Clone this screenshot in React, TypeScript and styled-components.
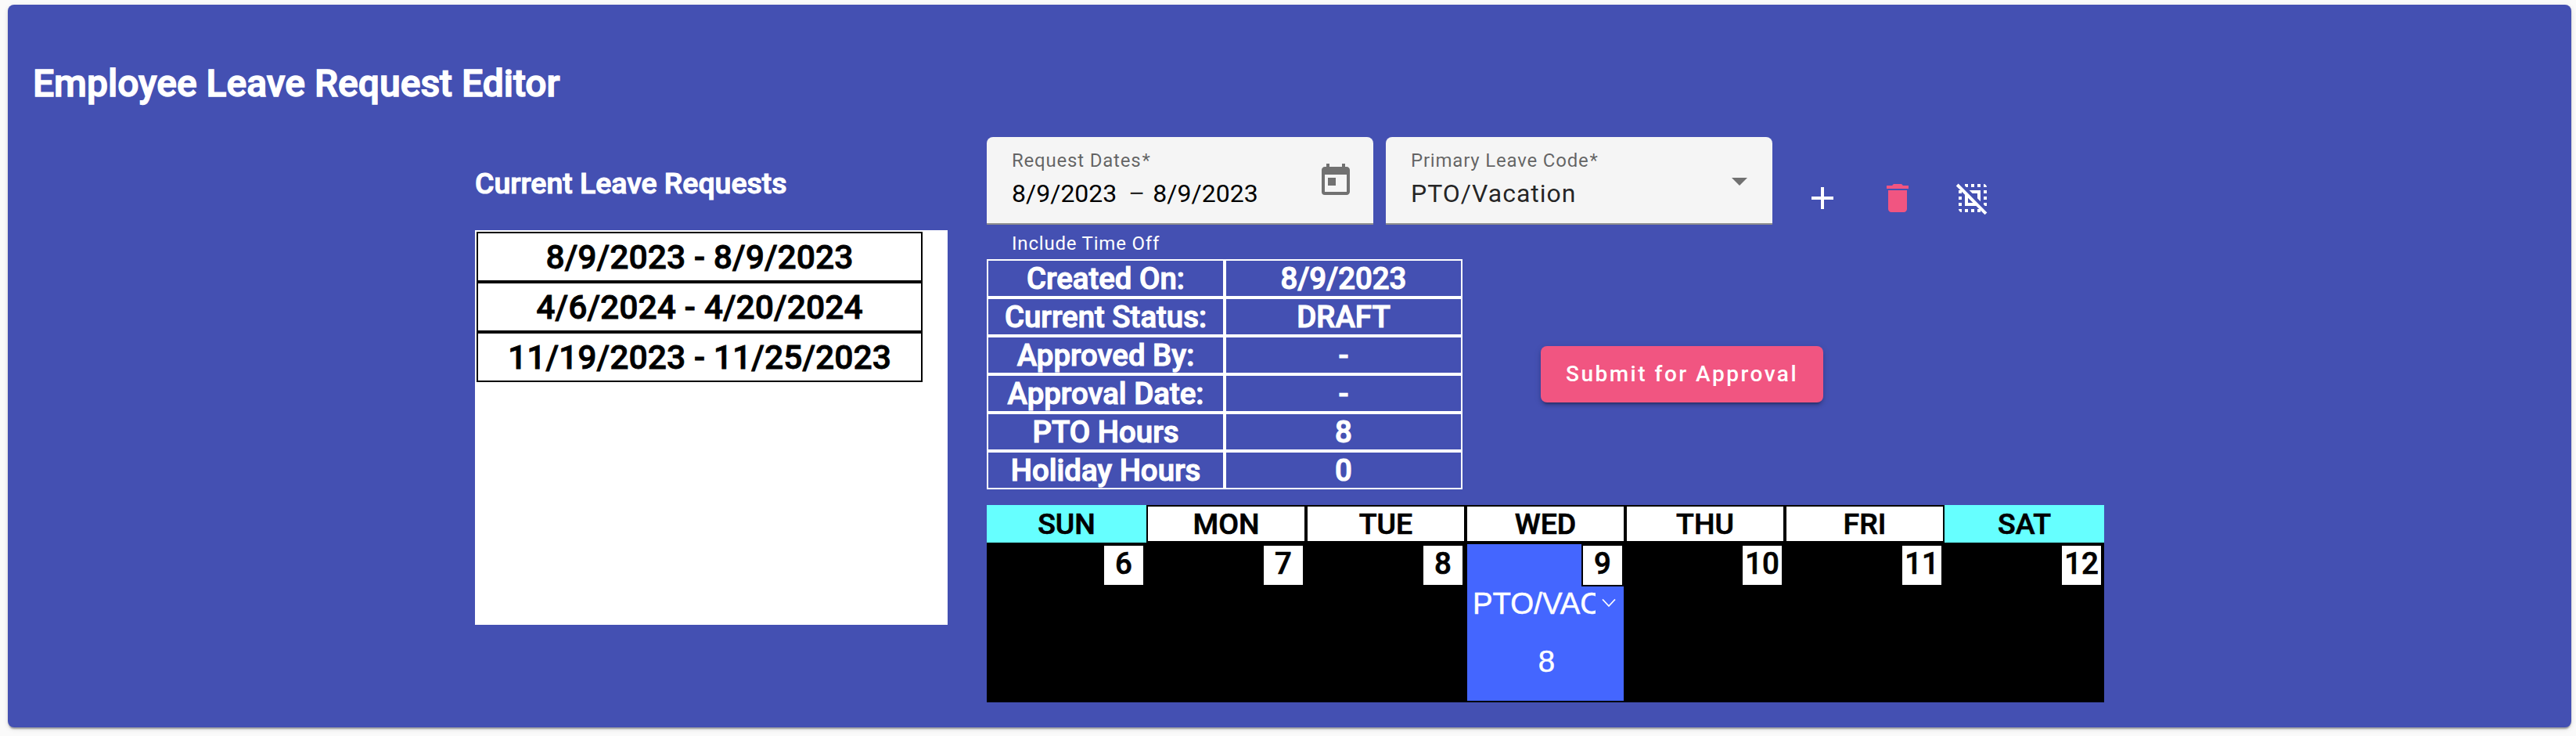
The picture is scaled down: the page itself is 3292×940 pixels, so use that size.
import React from 'react';
import styled, { createGlobalStyle, css } from 'styled-components';
import { MdAdd, MdArrowDropDown, MdDelete, MdDeselect, MdToday } from 'react-icons/md';

const GlobalStyle = createGlobalStyle`
  * { box-sizing: border-box; }
  body {
    margin: 0;
    background: #fafafa;
    font-family: Roboto, "Helvetica Neue", sans-serif;
  }
`;

/* Medium weight thickened by a hairline outline: stronger on the blue card, finer for black text. */
const heavy = css`
  font-weight: 500;
  -webkit-text-stroke: 0.03em currentColor;
`;

const heavyDark = css`
  font-weight: 500;
  -webkit-text-stroke: 0.018em currentColor;
`;

const Page = styled.main`
  height: 940px;
  padding: 6px 6px 11px 10px;
`;

const Card = styled.section`
  height: 923px;
  padding: 0 32px;
  border-radius: 8px;
  background: #4450b2;
  color: #fff;
  box-shadow: 0 4px 2px -2px rgba(0, 0, 0, 0.2), 0 2px 2px 0 rgba(0, 0, 0, 0.14), 0 2px 6px 0 rgba(0, 0, 0, 0.12);
`;

const Title = styled.h1`
  margin: 0;
  padding-top: 69px;
  height: 169px;
  font-size: 48px;
  line-height: 64px;
  ${heavy}
`;

const Columns = styled.div`
  display: flex;
  gap: 50px;
  padding-left: 565px;
`;

const RequestsColumn = styled.div`
  width: 604px;
`;

const Subtitle = styled.h2`
  margin: 0;
  padding-top: 35px;
  height: 119px;
  font-size: 37.44px;
  line-height: 48px;
  ${heavy}
`;

const RequestList = styled.div`
  height: 504px;
  padding: 2px;
  background: #fff;
`;

const RequestItem = styled.div`
  width: 570px;
  height: 64px;
  border: 2px solid #000;
  color: #000;
  font-size: 42.67px;
  line-height: 60px;
  text-align: center;
  ${heavyDark}
`;

const EditorColumn = styled.div`
  width: 1428px;
`;

const FormRow = styled.div`
  display: flex;
  height: 156px;
`;

const Field = styled.div`
  width: 494px;
  margin-right: 16px;
`;

const FieldBox = styled.div<{ $endGap: number }>`
  display: flex;
  align-items: center;
  justify-content: space-between;
  height: 112px;
  padding: 0 ${(p) => p.$endGap}px 0 32px;
  border-radius: 8px 8px 0 0;
  border-bottom: 2px solid #8f8f8f;
  background: #f5f5f5;
`;

const FieldText = styled.div`
  padding-bottom: 2px;
`;

const FieldLabel = styled.div`
  font-size: 24px;
  line-height: 36px;
  letter-spacing: 0.8px;
  color: rgba(0, 0, 0, 0.6);
`;

const Required = styled.span`
  margin-left: 1px;
`;

const FieldValue = styled.div<{ $dark?: boolean; $spacing: number }>`
  display: flex;
  font-size: 32px;
  line-height: 48px;
  letter-spacing: ${(p) => p.$spacing}px;
  color: ${(p) => (p.$dark ? '#000' : 'rgba(0, 0, 0, 0.87)')};
`;

const RangeDash = styled.span`
  margin: 0 10px 0 15px;
  color: rgba(0, 0, 0, 0.87);
`;

const FieldIcon = styled.span`
  display: flex;
  color: #717171;
  font-size: 48px;
  padding-top: 2px;
`;

const Hint = styled.div`
  padding-left: 32px;
  font-size: 24px;
  line-height: 48px;
  height: 44px;
  letter-spacing: 0.8px;
`;

const IconButton = styled.button<{ $color: string }>`
  display: flex;
  align-items: center;
  justify-content: center;
  width: 96px;
  height: 156px;
  padding: 0;
  border: 0;
  background: none;
  color: ${(p) => p.$color};
  font-size: 48px;
`;

const StatusRow = styled.div`
  display: flex;
  align-items: center;
  height: 294px;
`;

const StatusTable = styled.div`
  display: grid;
  grid-template-columns: 304px 304px;
  grid-auto-rows: 49px;
`;

const StatusCell = styled.div`
  border: 2px solid #fff;
  font-size: 38.4px;
  line-height: 45px;
  text-align: center;
  white-space: nowrap;
  ${heavy}
`;

const SubmitButton = styled.button`
  width: 361px;
  height: 72px;
  margin-left: 100px;
  padding: 0 0 2px;
  border: 0;
  border-radius: 8px;
  background: #f15581;
  color: #fff;
  font-family: inherit;
  font-size: 28px;
  font-weight: 500;
  letter-spacing: 2.5px;
  box-shadow: 0 6px 2px -4px rgba(0, 0, 0, 0.2), 0 4px 4px 0 rgba(0, 0, 0, 0.14), 0 2px 10px 0 rgba(0, 0, 0, 0.12);
`;

const Calendar = styled.div`
  display: grid;
  grid-template-columns: repeat(7, 204px);
  grid-template-rows: 48px 204px;
  margin-top: 20px;
`;

const WeekdayCell = styled.div<{ $weekend: boolean }>`
  border: 2px solid ${(p) => (p.$weekend ? '#66ffff' : '#000')};
  background: ${(p) => (p.$weekend ? '#66ffff' : '#fff')};
  color: #000;
  font-size: 37.44px;
  line-height: 44px;
  text-align: center;
  ${heavyDark}
`;

const DayCell = styled.div<{ $active: boolean }>`
  display: flex;
  flex-direction: column;
  border: 2px solid #000;
  background: ${(p) => (p.$active ? '#4466ff' : '#000')};
`;

const DayNumber = styled.div`
  align-self: flex-end;
  width: 54px;
  height: 54px;
  border: 2px solid #000;
  background: #fff;
  color: #000;
  font-size: 38.4px;
  line-height: 45px;
  text-align: center;
  ${heavyDark}
`;

const LeaveCode = styled.div`
  display: flex;
  align-items: center;
  height: 44px;
  padding: 0 10px 0 7px;
  font-family: "Liberation Sans", Arial, sans-serif;
  font-size: 38.4px;
  -webkit-text-stroke: 0.5px currentColor;
`;

const LeaveCodeText = styled.span`
  width: 157px;
  overflow: hidden;
  white-space: nowrap;
`;

const Chevron = styled.svg`
  margin: 0 0 2px 8px;
  width: 18px;
  height: 12px;
  flex: none;
`;

const Hours = styled.div`
  padding: 25px 0 0 3px;
  font-size: 38.4px;
  line-height: 54px;
  text-align: center;
  font-family: "Liberation Sans", Arial, sans-serif;
  -webkit-text-stroke: 0.5px currentColor;
`;

const requests = ['8/9/2023 - 8/9/2023', '4/6/2024 - 4/20/2024', '11/19/2023 - 11/25/2023'];

const status = [
  ['Created On:', '8/9/2023'],
  ['Current Status:', 'DRAFT'],
  ['Approved By:', '-'],
  ['Approval Date:', '-'],
  ['PTO Hours', '8'],
  ['Holiday Hours', '0'],
];

const weekdays = ['SUN', 'MON', 'TUE', 'WED', 'THU', 'FRI', 'SAT'];
const days: { day: number; code?: string; hours?: number }[] = [
  { day: 6 },
  { day: 7 },
  { day: 8 },
  { day: 9, code: 'PTO/VAC', hours: 8 },
  { day: 10 },
  { day: 11 },
  { day: 12 },
];

export default function App() {
  return (
    <Page>
      <GlobalStyle />
      <Card>
        <Title>Employee Leave Request Editor</Title>
        <Columns>
          <RequestsColumn>
            <Subtitle>Current Leave Requests</Subtitle>
            <RequestList>
              {requests.map((r) => (
                <RequestItem key={r}>{r}</RequestItem>
              ))}
            </RequestList>
          </RequestsColumn>
          <EditorColumn>
            <FormRow>
              <Field>
                <FieldBox $endGap={24}>
                  <FieldText>
                    <FieldLabel>Request Dates<Required>*</Required></FieldLabel>
                    <FieldValue $dark $spacing={0}>
                      <span>8/9/2023</span>
                      <RangeDash>–</RangeDash>
                      <span>8/9/2023</span>
                    </FieldValue>
                  </FieldText>
                  <FieldIcon><MdToday /></FieldIcon>
                </FieldBox>
                <Hint>Include Time Off</Hint>
              </Field>
              <Field>
                <FieldBox $endGap={18}>
                  <FieldText>
                    <FieldLabel>Primary Leave Code<Required>*</Required></FieldLabel>
                    <FieldValue $spacing={1}>PTO/Vacation</FieldValue>
                  </FieldText>
                  <FieldIcon><MdArrowDropDown /></FieldIcon>
                </FieldBox>
              </Field>
              <IconButton $color="#fff" aria-label="Add"><MdAdd /></IconButton>
              <IconButton $color="#f15581" aria-label="Delete"><MdDelete /></IconButton>
              <IconButton $color="#fff" aria-label="Deselect"><MdDeselect /></IconButton>
            </FormRow>
            <StatusRow>
              <StatusTable>
                {status.map(([label, value]) => (
                  <React.Fragment key={label}>
                    <StatusCell>{label}</StatusCell>
                    <StatusCell>{value}</StatusCell>
                  </React.Fragment>
                ))}
              </StatusTable>
              <SubmitButton>Submit for Approval</SubmitButton>
            </StatusRow>
            <Calendar>
              {weekdays.map((w, i) => (
                <WeekdayCell key={w} $weekend={i === 0 || i === 6}>{w}</WeekdayCell>
              ))}
              {days.map((d) => (
                <DayCell key={d.day} $active={!!d.code}>
                  <DayNumber>{d.day}</DayNumber>
                  {d.code && (
                    <>
                      <LeaveCode>
                        <LeaveCodeText>{d.code}</LeaveCodeText>
                        <Chevron viewBox="0 0 18 12" fill="none" stroke="#fff" strokeWidth="1.8">
                          <path d="M1 1.5 9 10l8-8.5" />
                        </Chevron>
                      </LeaveCode>
                      <Hours>{d.hours}</Hours>
                    </>
                  )}
                </DayCell>
              ))}
            </Calendar>
          </EditorColumn>
        </Columns>
      </Card>
    </Page>
  );
}
